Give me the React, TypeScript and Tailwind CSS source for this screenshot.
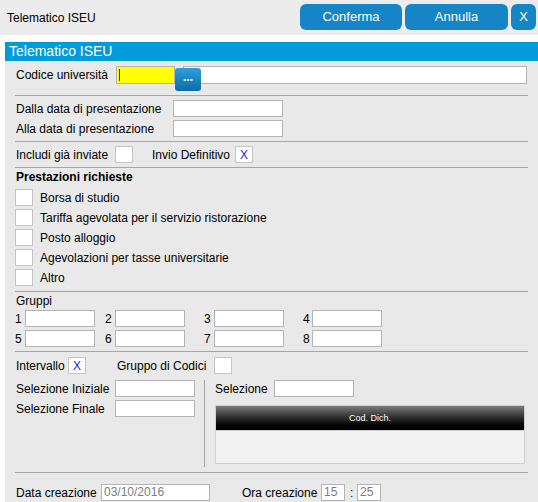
import React from 'react';

const inputCls = 'h-[17px] bg-white border border-[#b4b4b4]';

function Box({ checked }: { checked?: boolean }) {
  return (
    <div className="w-[18px] h-[17px] bg-white border border-[#c4c4c4] flex items-center justify-center text-[12px] leading-none text-[#2323e6]">
      {checked ? 'X' : ''}
    </div>
  );
}

function Sep({ className = '' }: { className?: string }) {
  return <div className={`border-t border-[#a6a6a6] ${className}`} />;
}

const prestazioni = [
  'Borsa di studio',
  'Tariffa agevolata per il servizio ristorazione',
  'Posto alloggio',
  'Agevolazioni per tasse universitarie',
  'Altro',
];

export default function App() {
  return (
    <div className="w-[538px] h-[502px] overflow-hidden bg-white text-[12px] leading-[14px] text-black font-['Liberation_Sans',Arial,sans-serif]">
      {/* top bar */}
      <div className="h-[35px] bg-[#ececec] flex items-start pl-[7px] pr-[2px]">
        <span className="mt-[11px] leading-[14px]">Telematico ISEU</span>
        <div className="ml-auto mt-[4px] flex gap-[3px] text-white text-[13px]">
          <button className="w-[102px] h-[26px] rounded-[6px] bg-[#1685c6]">Conferma</button>
          <button className="w-[103px] h-[26px] rounded-[6px] bg-[#1685c6]">Annulla</button>
          <button className="w-[25px] h-[26px] rounded-[6px] bg-[#1685c6]">X</button>
        </div>
      </div>

      <div className="pt-[7px] pl-[5px]">
        <div className="bg-[#e9e9e9] h-[460px]">
          <div className="h-[19px] bg-[#019bd9] text-white text-[14px] leading-[19px] pl-[4px]">
            Telematico ISEU
          </div>

          <div className="pl-[10px] pr-[10px]">
            {/* codice universita */}
            <div className="mt-[5px] flex items-center relative">
              <span className="w-[101px] pl-[1px]">Codice università</span>
              <div className="w-[59px] h-[18px] bg-[#ffff00] border border-[#b4b4b4] flex items-center pl-[2px]">
                <div className="w-[1px] h-[12px] bg-[#1a1a80]" />
              </div>
              <div className="ml-[8px] flex-1 h-[18px] bg-white border border-[#b4b4b4] mr-[1px]" />
              <div className="absolute left-[160px] top-[2px] w-[26px] h-[23px] rounded-[3px] bg-gradient-to-b from-[#2ea0dc] to-[#0a6ca9] text-white font-bold text-[12px] leading-[18px] text-center">
                ...
              </div>
            </div>

            <Sep className="mt-[11px]" />

            {/* date */}
            <div className="mt-[4px] flex items-center">
              <span className="w-[158px] pl-[1px]">Dalla data di presentazione</span>
              <div className={`${inputCls} w-[110px]`} />
            </div>
            <div className="mt-[3px] flex items-center">
              <span className="w-[158px] pl-[1px]">Alla data di presentazione</span>
              <div className={`${inputCls} w-[110px]`} />
            </div>

            <Sep className="mt-[4px]" />

            <div className="mt-[4px] flex items-center">
              <span className="w-[100px] pl-[1px]">Includi già inviate</span>
              <Box />
              <span className="ml-[19px] w-[83px]">Invio Definitivo</span>
              <Box checked />
            </div>

            <Sep className="mt-[4px]" />

            <div className="mt-[1px] font-bold leading-[16px] pl-[1px]">Prestazioni richieste</div>
            <div className="mt-[4px] flex flex-col gap-[3px]">
              {prestazioni.map((p) => (
                <div key={p} className="flex items-center">
                  <Box />
                  <span className="ml-[7px]">{p}</span>
                </div>
              ))}
            </div>

            <Sep className="mt-[5px]" />

            <div className="mt-[2px] leading-[14px] pl-[1px]">Gruppi</div>
            <div className="mt-[2px] flex flex-col gap-[3px]">
              {[
                [1, 2, 3, 4],
                [5, 6, 7, 8],
              ].map((row, i) => (
                <div key={i} className="flex items-center">
                  {row.map((n, j) => (
                    <div key={n} className={`flex items-center ${j === 0 ? 'w-[90px]' : 'w-[99px]'}`}>
                      <span className={j === 3 ? 'w-[9px]' : 'w-[10px]'}>{n}</span>
                      <div className={`${inputCls} w-[70px]`} />
                    </div>
                  ))}
                </div>
              ))}
            </div>

            <Sep className="mt-[4px]" />

            <div className="mt-[5px] flex items-center">
              <span className="w-[53px] pl-[1px]">Intervallo</span>
              <Box checked />
              <span className="ml-[31px] w-[97px]">Gruppo di Codici</span>
              <Box />
            </div>

            <div className="mt-[6px] flex">
              <div className="w-[189px] flex flex-col gap-[3px]">
                <div className="flex items-center">
                  <span className="w-[100px] pl-[1px]">Selezione Iniziale</span>
                  <div className={`${inputCls} w-[80px]`} />
                </div>
                <div className="flex items-center">
                  <span className="w-[100px] pl-[1px]">Selezione Finale</span>
                  <div className={`${inputCls} w-[80px]`} />
                </div>
              </div>
              <div className="h-[87px] border-l border-[#a6a6a6] pl-[10px] flex flex-col">
                <div className="flex items-center">
                  <span className="w-[59px]">Selezione</span>
                  <div className={`${inputCls} w-[80px]`} />
                </div>
                <div className="mt-[8px] w-[310px] border border-[#cfcfcf]">
                  <div className="h-[24px] bg-gradient-to-b from-[#7c7c7c] to-[#000000] text-white text-[9px] flex items-center justify-center">
                    Cod. Dich.
                  </div>
                  <div className="h-[33px] bg-[#f2f2f2] border-t border-[#cfcfcf]" />
                </div>
              </div>
            </div>

            <Sep className="mt-[5px]" />

            <div className="mt-[11px] flex items-center">
              <span className="w-[86px] pl-[1px]">Data creazione</span>
              <div className={`${inputCls} w-[109px] text-[#7d7d7d] leading-[15px] pl-[2px]`}>03/10/2016</div>
              <span className="ml-[32px] w-[79px]">Ora creazione</span>
              <div className={`${inputCls} w-[24px] text-[#7d7d7d] leading-[15px] pl-[2px]`}>15</div>
              <span className="ml-[5px] w-[7px]">:</span>
              <div className={`${inputCls} w-[24px] text-[#7d7d7d] leading-[15px] pl-[2px]`}>25</div>
            </div>
          </div>
        </div>
      </div>
    </div>
  );
}
